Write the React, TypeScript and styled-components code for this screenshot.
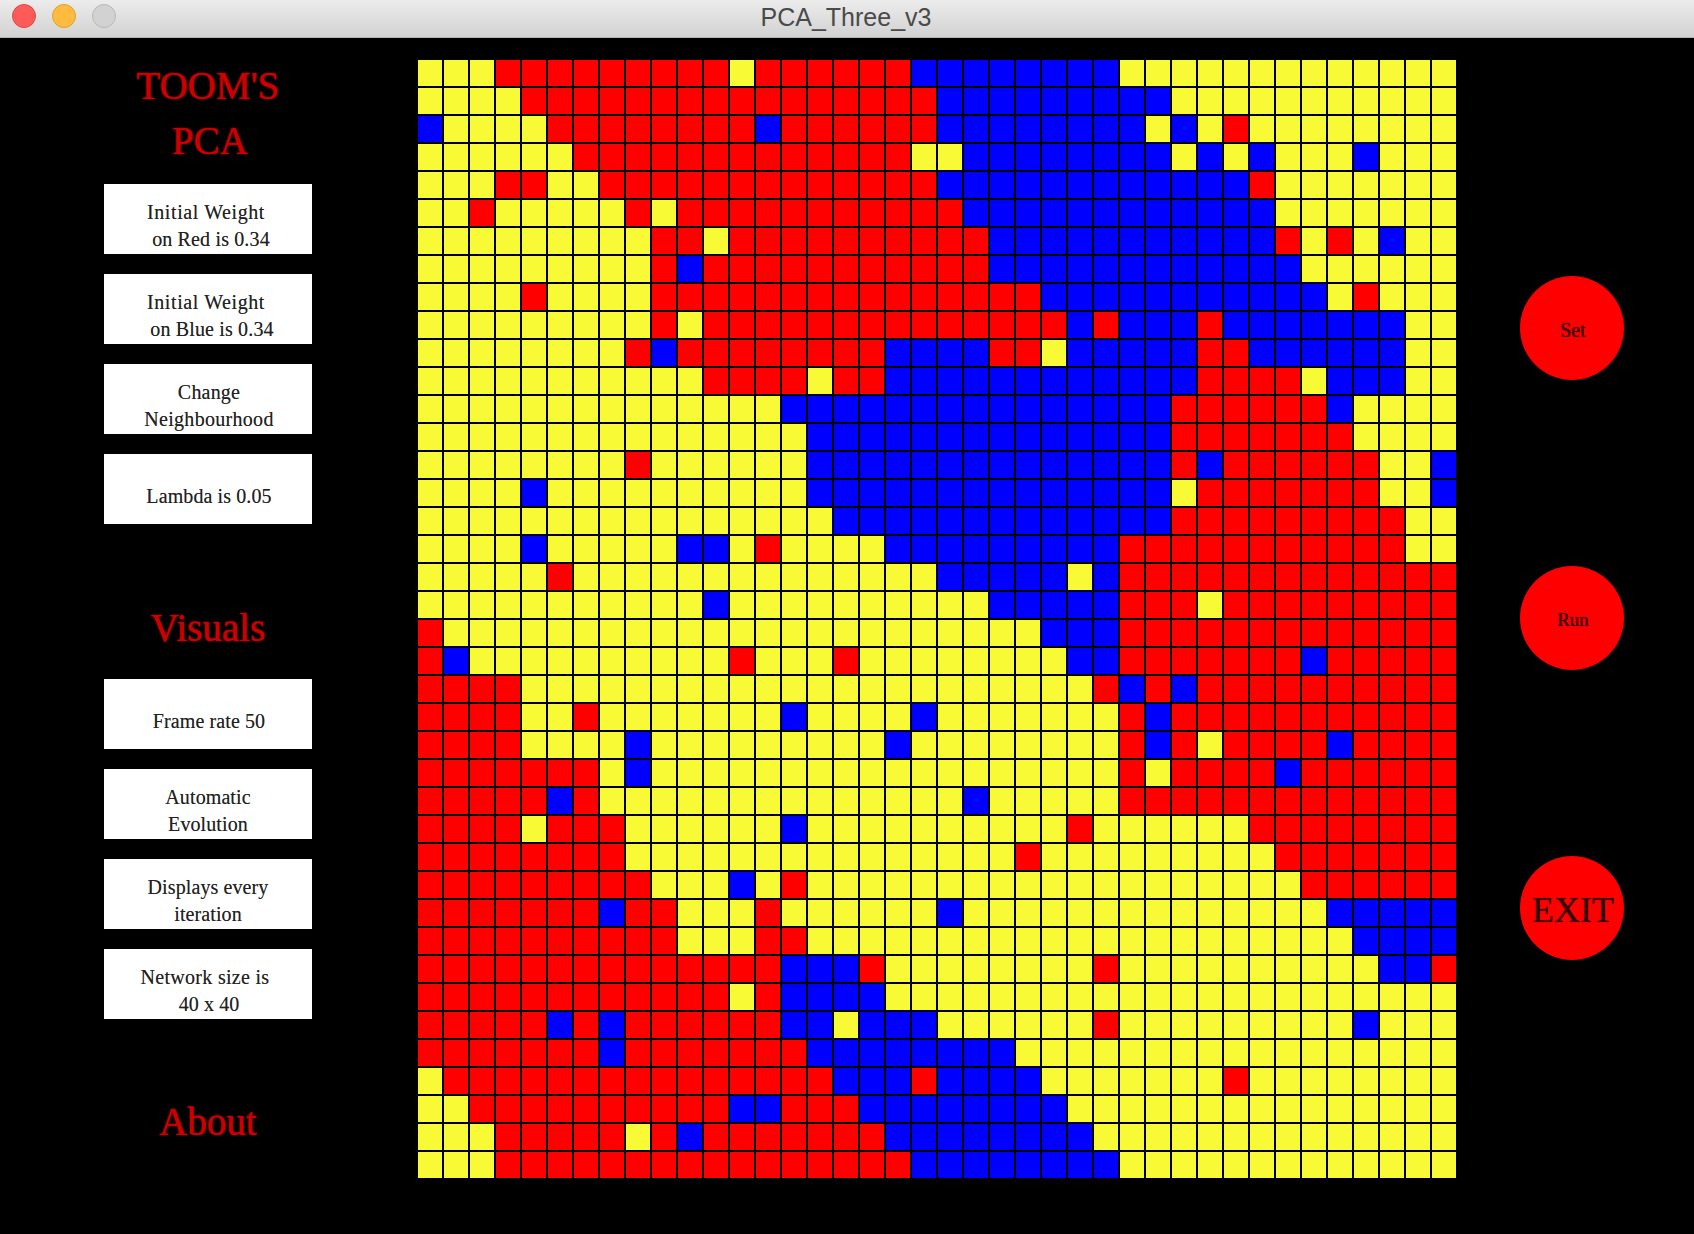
import React from "react";
import styled, { createGlobalStyle } from "styled-components";

const GlobalStyle = createGlobalStyle`
  html, body { margin: 0; padding: 0; background: #000; }
  body { width: 1694px; height: 1234px; overflow: hidden; font-family: "Liberation Serif", serif; }
`;

const TitleBar = styled.header`
  height: 37px;
  border-bottom: 1px solid #b4b4b4;
  background: linear-gradient(#ececec, #d2d2d2);
  display: flex;
  align-items: center;
  position: relative;
`;
const Lights = styled.div`
  display: flex;
  gap: 16px;
  padding: 0 0 5px 12px;
`;
const Light = styled.span<{ $bg: string; $edge: string }>`
  width: 24px;
  height: 24px;
  box-sizing: border-box;
  border-radius: 50%;
  background: ${(p) => p.$bg};
  border: 1px solid ${(p) => p.$edge};
`;
const WindowTitle = styled.div`
  position: absolute;
  left: 0;
  right: 2px;
  top: 1px;
  text-align: center;
  font: 25px/32px "Liberation Sans", sans-serif;
  color: #4a4a4a;
`;

const Main = styled.main`
  display: flex;
  align-items: flex-start;
`;
const Sidebar = styled.aside`
  width: 416px;
  margin-right: 2px;
  padding-top: 20px;
  display: flex;
  flex-direction: column;
  align-items: center;
`;
const Heading = styled.h1<{ $top?: number; $bottom?: number }>`
  margin: ${(p) => p.$top ?? 0}px 0 ${(p) => p.$bottom ?? 0}px;
  font-size: 39px;
  font-weight: 400;
  line-height: 55px;
  text-align: center;
  color: #cc0000;
  text-shadow: 0 0 1.5px #ff0000;
`;
const HeadingLine = styled.span<{ $shift?: number }>`
  display: block;
  padding-left: ${(p) => (p.$shift ?? 0) * 2}px;
`;
const OptionList = styled.div`
  display: flex;
  flex-direction: column;
  gap: 20px;
`;
const Option = styled.div`
  width: 208px;
  height: 70px;
  box-sizing: border-box;
  padding-top: 14px;
  background: #fff;
  display: flex;
  flex-direction: column;
  justify-content: center;
  align-items: center;
  font-size: 20px;
  line-height: 27px;
  color: #222;
  text-shadow: 0 0 0.6px rgba(0, 0, 0, 0.45);
  white-space: nowrap;
`;
const OptionLine = styled.span<{ $shift: number; $track: number }>`
  padding-left: ${(p) => Math.max(p.$shift, 0) * 2}px;
  padding-right: ${(p) => Math.max(-p.$shift, 0) * 2}px;
  letter-spacing: ${(p) => p.$track}px;
`;

const Board = styled.section`
  margin-top: 22px;
  display: grid;
  grid-template-columns: repeat(40, 24px);
  grid-auto-rows: 26px;
  gap: 2px;
  background: #000;
`;
const colours: Record<string, string> = { Y: "#f7fa35", R: "#ff0000", B: "#0000ff" };
const Cell = styled.div<{ $c: string }>`
  background: ${(p) => colours[p.$c]};
`;

const Actions = styled.nav`
  margin-left: 64px;
  padding-top: 238px;
  display: flex;
  flex-direction: column;
  gap: 186px;
`;
const RoundButton = styled.button<{ $size: number }>`
  width: 104px;
  height: 104px;
  padding: 4px 0 0 2px;
  border: 0;
  border-radius: 50%;
  background: #ff0000;
  font-family: "Liberation Serif", serif;
  font-size: ${(p) => p.$size}px;
  color: #300000;
  text-shadow: 0 0 1px rgba(60, 0, 0, 0.7);
`;

const rows = [
  "YYYRRRRRRRRRYRRRRRRBBBBBBBBYYYYYYYYYYYYY",
  "YYYYRRRRRRRRRRRRRRRRBBBBBBBBBYYYYYYYYYYY",
  "BYYYYRRRRRRRRBRRRRRRBBBBBBBBYBYRYYYYYYYY",
  "YYYYYYRRRRRRRRRRRRRYYBBBBBBBBYBYBYYYBYYY",
  "YYYRRYYRRRRRRRRRRRRRBBBBBBBBBBBBRYYYYYYY",
  "YYRYYYYYRYRRRRRRRRRRRBBBBBBBBBBBBYYYYYYY",
  "YYYYYYYYYRRYRRRRRRRRRRBBBBBBBBBBBRYRYBYY",
  "YYYYYYYYYRBRRRRRRRRRRRBBBBBBBBBBBBYYYYYY",
  "YYYYRYYYYRRRRRRRRRRRRRRRBBBBBBBBBBBYRYYY",
  "YYYYYYYYYRYRRRRRRRRRRRRRRBRBBBRBBBBBBBYY",
  "YYYYYYYYRBRRRRRRRRBBBBRRYBBBBBRRBBBBBBYY",
  "YYYYYYYYYYYRRRRYRRBBBBBBBBBBBBRRRRYBBBYY",
  "YYYYYYYYYYYYYYBBBBBBBBBBBBBBBRRRRRRBYYYY",
  "YYYYYYYYYYYYYYYBBBBBBBBBBBBBBRRRRRRRYYYY",
  "YYYYYYYYRYYYYYYBBBBBBBBBBBBBBRBRRRRRRYYB",
  "YYYYBYYYYYYYYYYBBBBBBBBBBBBBBYRRRRRRRYYB",
  "YYYYYYYYYYYYYYYYBBBBBBBBBBBBBRRRRRRRRRYY",
  "YYYYBYYYYYBBYRYYYYBBBBBBBBBRRRRRRRRRRRYY",
  "YYYYYRYYYYYYYYYYYYYYBBBBBYBRRRRRRRRRRRRR",
  "YYYYYYYYYYYBYYYYYYYYYYBBBBBRRRYRRRRRRRRR",
  "RYYYYYYYYYYYYYYYYYYYYYYYBBBRRRRRRRRRRRRR",
  "RBYYYYYYYYYYRYYYRYYYYYYYYBBRRRRRRRBRRRRR",
  "RRRRYYYYYYYYYYYYYYYYYYYYYYRBRBRRRRRRRRRR",
  "RRRRYYRYYYYYYYBYYYYBYYYYYYYRBRRRRRRRRRRR",
  "RRRRYYYYBYYYYYYYYYBYYYYYYYYRBRYRRRRBRRRR",
  "RRRRRRRYBYYYYYYYYYYYYYYYYYYRYRRRRBRRRRRR",
  "RRRRRBRYYYYYYYYYYYYYYBYYYYYRRRRRRRRRRRRR",
  "RRRRYRRRYYYYYYBYYYYYYYYYYRYYYYYYRRRRRRRR",
  "RRRRRRRRYYYYYYYYYYYYYYYRYYYYYYYYYRRRRRRR",
  "RRRRRRRRRYYYBYRYYYYYYYYYYYYYYYYYYYRRRRRR",
  "RRRRRRRBRRYYYRYYYYYYBYYYYYYYYYYYYYYBBBBB",
  "RRRRRRRRRRYYYRRYYYYYYYYYYYYYYYYYYYYYBBBB",
  "RRRRRRRRRRRRRRBBBRYYYYYYYYRYYYYYYYYYYBBR",
  "RRRRRRRRRRRRYRBBBBYYYYYYYYYYYYYYYYYYYYYY",
  "RRRRRBRBRRRRRRBBYBBBYYYYYYRYYYYYYYYYBYYY",
  "RRRRRRRBRRRRRRRBBBBBBBBYYYYYYYYYYYYYYYYY",
  "YRRRRRRRRRRRRRRRBBBRBBBBYYYYYYYRYYYYYYYY",
  "YYRRRRRRRRRRBBRRRBBBBBBBBYYYYYYYYYYYYYYY",
  "YYYRRRRRYRBRRRRRRRBBBBBBBBYYYYYYYYYYYYYY",
  "YYYRRRRRRRRRRRRRRRRBBBBBBBBYYYYYYYYYYYYY",
];

type Line = [string, number, number];
const topOptions: Line[][] = [
  [["Initial Weight", -2, 0.6], ["on Red is 0.34", 3, 0.15]],
  [["Initial Weight", -2, 0.6], ["on Blue is 0.34", 4, 0.15]],
  [["Change", 1, 0.2], ["Neighbourhood", 1, 0.3]],
  [["Lambda is 0.05", 1, 0.1]],
];
const visualOptions: Line[][] = [
  [["Frame rate 50", 1, 0.1]],
  [["Automatic", 0, 0.1], ["Evolution", 0, 0.1]],
  [["Displays every", 0, 0.1], ["iteration", 0, 0.1]],
  [["Network size is", -3, 0.3], ["40 x 40", 1, 0.1]],
];

const Options = ({ items }: { items: Line[][] }) => (
  <OptionList>
    {items.map((lines, i) => (
      <Option key={i}>
        {lines.map(([text, shift, track]) => (
          <OptionLine key={text} $shift={shift} $track={track}>{text}</OptionLine>
        ))}
      </Option>
    ))}
  </OptionList>
);

export default function App() {
  return (
    <>
      <GlobalStyle />
      <TitleBar>
        <Lights>
          <Light $bg="#fc5b57" $edge="#e2463f" />
          <Light $bg="#fdbc40" $edge="#e0a02c" />
          <Light $bg="#d2d2d2" $edge="#b8b8b8" />
        </Lights>
        <WindowTitle>PCA_Three_v3</WindowTitle>
      </TitleBar>
      <Main>
        <Sidebar>
          <Heading $bottom={16}>
            <HeadingLine>TOOM'S</HeadingLine>
            <HeadingLine $shift={2}>PCA</HeadingLine>
          </Heading>
          <Options items={topOptions} />
          <Heading $top={76} $bottom={24}>Visuals</Heading>
          <Options items={visualOptions} />
          <Heading $top={75}>About</Heading>
        </Sidebar>
        <Board>
          {rows.flatMap((row, r) =>
            row.split("").map((c, i) => <Cell key={`${r}-${i}`} $c={c} />)
          )}
        </Board>
        <Actions>
          <RoundButton $size={20}>Set</RoundButton>
          <RoundButton $size={19}>Run</RoundButton>
          <RoundButton $size={36}>EXIT</RoundButton>
        </Actions>
      </Main>
    </>
  );
}
